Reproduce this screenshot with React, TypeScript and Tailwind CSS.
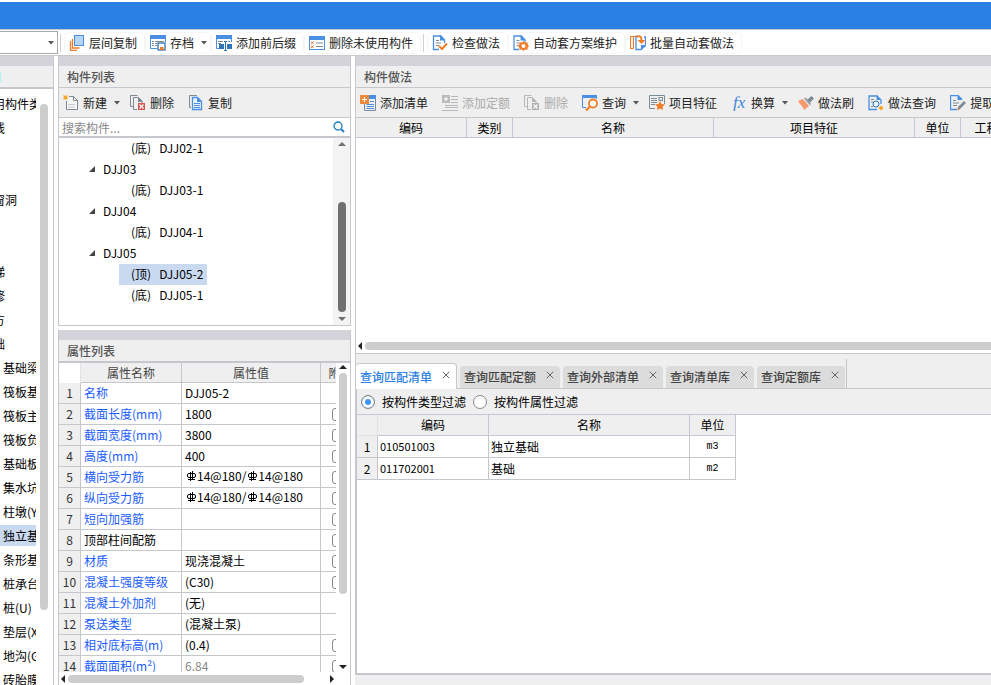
import React, { useState } from 'react';
import { X } from 'lucide-react';

interface IconButtonProps {
  icon: React.ReactNode;
  label: string;
  dropdown?: boolean;
  disabled?: boolean;
  framed?: boolean;
}

interface PropertyRow {
  name: string;
  value: string;
  linked?: boolean;
  readOnly?: boolean;
  attach?: boolean;
}

interface QueryItem {
  code: string;
  name: string;
  unit: string;
}

const BLUE = '#4a90e2';
const DARK_BLUE = '#2f74b5';
const ORANGE = '#f07c28';
const SLATE = '#7c8a94';

const Svg = ({ children }: { children: React.ReactNode }) => (
  <svg className="h-4 w-4 shrink-0" viewBox="0 0 16 16" fill="none" aria-hidden="true">
    {children}
  </svg>
);

const LayerCopyIcon = () => (
  <Svg>
    <path d="M1.5 6v9.500H8M3.500 4v9h7" stroke={ORANGE} strokeWidth="1.3" />
    <rect x="5.500" y=".5" width="9" height="10" fill="#b5d6f8" stroke={BLUE} />
  </Svg>
);

const ArchiveIcon = () => (
  <Svg>
    <path d="M.5 3v10.500H7M15.500 3v4" stroke={BLUE} />
    <path d="M0 0h16v4H0z" fill={BLUE} />
    <path d="M2 6.500h2M2 8.500h2M2 10.500h2M5 6.500h9M5 8.500h2M5 10.500h2" stroke={SLATE} />
    <rect x="8" y="8" width="7" height="7" fill="#fff" stroke={DARK_BLUE} strokeWidth="1.3" />
    <path d="M10 12h3.500v3H10z" fill={ORANGE} />
  </Svg>
);

const AffixIcon = () => (
  <Svg>
    <path d="M0 0h16v4H0z" fill={BLUE} />
    <path d="M.5 4v9.500H3M15.500 4v3" stroke={BLUE} />
    <path d="M2 6.500h5M2 8.500h3M12 6.500h2" stroke={SLATE} />
    <path d="M3 9h5v5H3zM11 9h5v5h-5z" fill={DARK_BLUE} />
    <path d="M9.500 7v8M8 6.500h3M8 15.500h3" stroke={DARK_BLUE} />
  </Svg>
);

const UnusedIcon = () => (
  <Svg>
    <rect x=".5" y="1.500" width="15" height="13" fill="#fff" stroke={BLUE} />
    <path d="M0 1h16v4H0z" fill={BLUE} />
    <path d="M2 6.500l2.500 2.500m0-2.500L2 9M2 10.500L4.500 13m0-2.500L2 13" stroke={ORANGE} />
    <path d="M7 8h7M7 11.500h7" stroke={SLATE} />
  </Svg>
);

const CheckDocIcon = () => (
  <Svg>
    <path d="M7 14.500H1.500V1H9l3.500 4v3" stroke={BLUE} strokeWidth="1.3" />
    <path d="M8 0l5.500 5.500H8z" fill={BLUE} />
    <path d="M4 5.500h3M4 8h5M4 10.500h3" stroke={SLATE} />
    <path d="M7 11l3 3 5-5.500" stroke={ORANGE} strokeWidth="2" />
  </Svg>
);

const MaintainIcon = () => (
  <Svg>
    <path d="M6 14.500H1V1h7.500L12 5v2" stroke={BLUE} strokeWidth="1.3" />
    <path d="M7.500 0L13 5.500H7.500z" fill={BLUE} />
    <path d="M3.500 5.500h3M3.500 8h3M3.500 10.500h2" stroke={SLATE} />
    <path d="M10.500 6l1.500 1.500 2.500-.3.200 2.300L16 11l-1.300 1.500-.2 2.300-2.500-.3-1.500 1.500L9 14.500l-2.500.3-.2-2.300L5 11l1.300-1.500.2-2.300 2.500.3z" fill={ORANGE} />
    <circle cx="10.500" cy="11" r="2" fill="#fff" />
  </Svg>
);

const BatchIcon = () => (
  <Svg>
    <path d="M3.500 1.500h-3v12h3M6 1.500H3.500v12" stroke={ORANGE} strokeWidth="1.2" />
    <path d="M7.500 1.500H6v13h5l4.500-4V2H14" stroke={BLUE} strokeWidth="1.3" />
    <path d="M16 10l-5 5v-5z" fill={BLUE} />
    <path d="M6.500 1.500c4-1 5 .5 5 4" stroke={ORANGE} strokeWidth="2" />
    <path d="M7.500 5h8l-4 4z" fill={ORANGE} />
  </Svg>
);

const NewIcon = () => (
  <Svg>
    <path d="M6 1.500h4.500l4 4v9h-11V6" fill="#f7f7f7" stroke={SLATE} />
    <path d="M10.500 1.500v4h4" stroke={SLATE} />
    <path d="M5 9.500h7M5 12h7" stroke="#c5cacd" />
    <path d="M2.500 0v5M0 2.500h5M.5.5l4 4M4.500.5l-4 4" stroke="#f5a623" />
  </Svg>
);

const DeleteIcon = ({ muted }: { muted?: boolean }) => (
  <Svg>
    <path d="M3 11.500H.5v-11h7" stroke={muted ? '#b8b8b8' : SLATE} />
    <path d="M7 14.500H3.500v-12h5L12 6v2" stroke={muted ? '#b8b8b8' : SLATE} />
    <path d="M8 2l5 5H8z" fill={muted ? '#b8b8b8' : SLATE} />
    <path d="M8 8h7v7H8z" fill={muted ? '#b0b0b0' : '#d9534f'} />
    <path d="M9.500 9.500l4 4m0-4l-4 4" stroke="#fff" strokeWidth="1.2" />
  </Svg>
);

const CopyIcon = () => (
  <Svg>
    <path d="M3 12.500H1.500v-12H9" stroke={SLATE} />
    <path d="M4.500 2.500h5l4 4v8h-9z" fill="#eaf3fd" stroke={BLUE} strokeWidth="1.3" />
    <path d="M9 2l5 5H9z" fill={BLUE} />
    <path d="M6 8.500h6M6 10.500h6M6 12.500h6" stroke={BLUE} />
  </Svg>
);

const AddListIcon = ({ muted }: { muted?: boolean }) => (
  <Svg>
    {muted ? (
      <>
        <path d="M9 1.500h7M9 4.500h7M9 7.500h7M3 10.500h13M3 12.500h13M0 15.500h16" stroke="#b8b8b8" />
        <path d="M0 0h8v8H0z" fill="#bcbcbc" />
        <path d="M4 2v4M2 4h4" stroke="#fff" />
      </>
    ) : (
      <>
        <path d="M15.500 3v12.500h-11V9" stroke={SLATE} />
        <path d="M9 0h7v4H9z" fill={BLUE} />
        <path d="M10 6.500h4M6.500 9.500H14M6.500 11.500H14M6.500 13.500H14" stroke={BLUE} />
        <path d="M0 0h9v9H0z" fill="#ee8a3c" />
        <path d="M4.500 2v5M2 4.500h5" stroke="#fff" />
      </>
    )}
  </Svg>
);

const QueryIcon = () => (
  <Svg>
    <path d="M4 12.500H.5V1M14.500 1v3" stroke={BLUE} />
    <path d="M0 0h15v3H0z" fill={BLUE} />
    <circle cx="11" cy="8.500" r="4" fill="#fff" stroke={ORANGE} strokeWidth="1.8" />
    <path d="M8 11.500L4 15.500" stroke={ORANGE} strokeWidth="2.2" />
  </Svg>
);

const FeatureIcon = () => (
  <Svg>
    <path d="M6 13.500H.5V.5h15V9" stroke={SLATE} />
    <path d="M2 3.500h6M2 5.500h6M2 7.500h6M2 9.500h4" stroke={SLATE} />
    <rect x="10" y="2.500" width="3.500" height="3" stroke={SLATE} />
    <path d="M11 6l1.500 3 3.500.4-2.500 2.300.6 3.300-3.100-1.600L7.900 15l.6-3.300L6 9.400 9.500 9z" fill={ORANGE} />
  </Svg>
);

const FxIcon = () => (
  <svg className="h-4 w-4 shrink-0" viewBox="0 0 16 16" aria-hidden="true">
    <text x="2" y="13" fontSize="17" fontStyle="italic" fontFamily="Liberation Serif, serif" fill="#3f86d6">
      fx
    </text>
  </svg>
);

const BrushIcon = () => (
  <Svg>
    <path d="M9 5l4.500-4L16 3.500 11.500 8z" fill={SLATE} />
    <path d="M6 3.500l2-1 5 6-1 2z" fill="#93a0a8" />
    <path d="M0 6l5-2 6 7-5 4c-1-4-4-5-6-9z" fill="#f79a6c" />
  </Svg>
);

const SearchDocIcon = () => (
  <Svg>
    <path d="M9 14.500H1V1h8l4 4v4" stroke={BLUE} strokeWidth="1.3" />
    <path d="M8.500 0l5 5h-5z" fill={BLUE} />
    <path d="M3 4.500h3M3 7h2M3 11.500h2" stroke={SLATE} />
    <circle cx="8" cy="9" r="3" fill="#e6f1fc" stroke={DARK_BLUE} />
    <path d="M13 10.500l2.500 2.500-2.500 2.500-2.500-2.500z" fill="#f5a623" />
  </Svg>
);

const ExtractIcon = () => (
  <Svg>
    <path d="M7 14.500H.5V.5H8l4 4" stroke={BLUE} strokeWidth="1.3" />
    <path d="M7.500 0l5 5h-5z" fill={BLUE} />
    <path d="M3 5.500h3M3 8h6M3 10.500h4" stroke={SLATE} />
    <path d="M14 6l2 2-6 6-2.500 1 .5-3z" fill={SLATE} />
    <path d="M8 13l2 1-2.500 1.500z" fill={ORANGE} />
  </Svg>
);

const SearchIcon = () => (
  <svg className="h-3 w-3 shrink-0" viewBox="0 0 12 12" fill="none" aria-hidden="true">
    <circle cx="5" cy="5" r="4" stroke="#1f7fc4" strokeWidth="1.3" />
    <path d="M8 8l3 3" stroke="#1f7fc4" strokeWidth="2" />
  </svg>
);

const Caret = () => (
  <svg className="h-1 w-1.5 shrink-0" viewBox="0 0 6 4" aria-hidden="true">
    <path d="M0 0h6L3 3.500z" fill="#555" />
  </svg>
);

const Arrow = ({ dir, color = '#222' }: { dir: 'up' | 'down' | 'left' | 'right'; color?: string }) => {
  const paths = {
    up: 'M0 6l4-4 4 4z',
    down: 'M0 2l4 4 4-4z',
    left: 'M6 0L2 4l4 4z',
    right: 'M2 0l4 4-4 4z'
  };
  return (
    <svg className="h-2 w-2 shrink-0" viewBox="0 0 8 8" aria-hidden="true">
      <path d={paths[dir]} fill={color} />
    </svg>
  );
};

// Steel grade mark in front of a bar diameter
const RebarMark = () => (
  <svg className="mb-1 inline h-3 w-3" viewBox="0 0 12 12" fill="none" aria-hidden="true">
    <rect x="2.500" y="3.500" width="8" height="4" rx="1.5" stroke="#000" />
    <path d="M5.500 2v9M7.500 1v9M3 9.500h7" stroke="#000" />
  </svg>
);

const IconButton = ({ icon, label, dropdown, disabled, framed }: IconButtonProps) => (
  <button
    type="button"
    disabled={disabled}
    className={`flex h-5 shrink-0 items-center gap-1 whitespace-nowrap rounded pl-1 text-[#222] disabled:text-[#aaa] ${
      dropdown ? 'pr-[3px]' : 'pr-[7px]'
    } ${framed ? 'shadow-[0_0_0_1px_#f6f6f6]' : ''}`}
  >
    {icon}
    <span className={dropdown ? 'mr-[3px]' : ''}>{label}</span>
    {dropdown && <Caret />}
  </button>
);

const PanelHeader = ({ title }: { title: string }) => (
  <>
    <div className="h-2.5 shrink-0 bg-[#d3d3d9]" />
    <h2 className="flex h-[22px] shrink-0 items-center border-b border-[#c5c7cc] bg-[#efefef] px-2 font-medium text-[#555]">
      {title}
    </h2>
  </>
);

const categories = [
  { label: '常用构件类型' },
  { label: '轴线' },
  { label: '' },
  { label: '' },
  { label: '门窗洞' },
  { label: '' },
  { label: '' },
  { label: '楼梯' },
  { label: '装修' },
  { label: '土方' },
  { label: '基础' },
  { label: '基础梁', child: true },
  { label: '筏板基础', child: true },
  { label: '筏板主筋', child: true },
  { label: '筏板负筋', child: true },
  { label: '基础板带', child: true },
  { label: '集水坑', child: true },
  { label: '柱墩(Y)', child: true },
  { label: '独立基础', child: true },
  { label: '条形基础', child: true },
  { label: '桩承台', child: true },
  { label: '桩(U)', child: true },
  { label: '垫层(X)', child: true },
  { label: '地沟(G)', child: true },
  { label: '砖胎膜', child: true }
];

const components = [
  { pos: '(底)', label: 'DJJ02-1' },
  { label: 'DJJ03' },
  { pos: '(底)', label: 'DJJ03-1' },
  { label: 'DJJ04' },
  { pos: '(底)', label: 'DJJ04-1' },
  { label: 'DJJ05' },
  { pos: '(顶)', label: 'DJJ05-2' },
  { pos: '(底)', label: 'DJJ05-1' }
];

const properties: PropertyRow[] = [
  { name: '名称', value: 'DJJ05-2', linked: true },
  { name: '截面长度(mm)', value: '1800', linked: true, attach: true },
  { name: '截面宽度(mm)', value: '3800', linked: true, attach: true },
  { name: '高度(mm)', value: '400', linked: true, attach: true },
  { name: '横向受力筋', value: '#14@180/#14@180', linked: true, attach: true },
  { name: '纵向受力筋', value: '#14@180/#14@180', linked: true, attach: true },
  { name: '短向加强筋', value: '', linked: true, attach: true },
  { name: '顶部柱间配筋', value: '', attach: true },
  { name: '材质', value: '现浇混凝土', linked: true, attach: true },
  { name: '混凝土强度等级', value: '(C30)', linked: true, attach: true },
  { name: '混凝土外加剂', value: '(无)', linked: true },
  { name: '泵送类型', value: '(混凝土泵)', linked: true },
  { name: '相对底标高(m)', value: '(0.4)', linked: true, attach: true },
  { name: '截面面积(m²)', value: '6.84', linked: true, readOnly: true, attach: true }
];

const tabs = ['查询匹配清单', '查询匹配定额', '查询外部清单', '查询清单库', '查询定额库'];

const queryItems: QueryItem[] = [
  { code: '010501003', name: '独立基础', unit: 'm3' },
  { code: '011702001', name: '基础', unit: 'm2' }
];

const TopToolbar = () => (
  <div className="flex h-[27px] shrink-0 items-center overflow-hidden border-y border-[#c8c8cd] bg-white">
    <div className="relative w-[58px] shrink-0">
      <select
        aria-label="楼层"
        className="block h-[23px] w-full appearance-none border border-l-0 border-[#a9a9ad] bg-white"
      />
      <span className="pointer-events-none absolute inset-y-0 right-1 flex items-center">
        <Caret />
      </span>
    </div>
    <div className="mr-1 ml-0.5 h-[18px] w-px shrink-0 bg-[#d0d0d0]" />
    <div className="flex gap-0.5">
      <IconButton framed icon={<LayerCopyIcon />} label="层间复制" />
      <IconButton framed icon={<ArchiveIcon />} label="存档" dropdown />
      <IconButton framed icon={<AffixIcon />} label="添加前后缀" />
      <IconButton framed icon={<UnusedIcon />} label="删除未使用构件" />
    </div>
    <div className="mr-1 ml-[3px] h-[18px] w-px shrink-0 bg-[#d0d0d0]" />
    <div className="flex gap-0.5">
      <IconButton framed icon={<CheckDocIcon />} label="检查做法" />
      <IconButton framed icon={<MaintainIcon />} label="自动套方案维护" />
      <IconButton framed icon={<BatchIcon />} label="批量自动套做法" />
    </div>
  </div>
);

const CategoryPanel = () => (
  <nav className="flex w-[54px] shrink-0 flex-col border-r border-[#c5c7cc] bg-white">
    <div className="h-2.5 shrink-0 bg-[#d3d3d9]" />
    <div className="flex h-[23px] shrink-0 items-center border-b-2 border-[#c5c7cc] bg-[#efefef]">
      <span className="h-2.5 w-px bg-[#b5f0f5]" />
    </div>
    <div className="flex min-h-0 flex-1">
      <ul className="w-9 overflow-hidden pt-1">
        {categories.map((item, i) => (
          <li
            key={i}
            className={`mb-[3px] flex h-[21px] items-center whitespace-nowrap ${
              item.label === '独立基础' ? 'bg-[#c8d9f0]' : ''
            }`}
          >
            <span className={item.child ? 'ml-[3px]' : '-ml-[19px]'}>{item.label}</span>
          </li>
        ))}
      </ul>
      <div className="mt-[15px] mb-[75px] ml-1 w-2 rounded-full bg-[#cdcdcd]" />
    </div>
  </nav>
);

const ComponentList = () => (
  <section className="flex h-[270px] shrink-0 flex-col border-x border-b border-[#c5c7cc]">
    <PanelHeader title="构件列表" />
    <div className="flex h-[30px] shrink-0 items-center gap-[3px] border-b border-[#c5c7cc] bg-[#efefef]">
      <IconButton icon={<NewIcon />} label="新建" dropdown />
      <IconButton icon={<DeleteIcon />} label="删除" />
      <IconButton icon={<CopyIcon />} label="复制" />
    </div>
    <div className="flex h-5 shrink-0 items-center border-b-2 border-[#c5c7cc] pr-[5px]">
      <input
        aria-label="搜索构件"
        placeholder="搜索构件..."
        className="h-full min-w-0 flex-1 px-[3px] outline-none placeholder:text-[#888]"
      />
      <SearchIcon />
    </div>
    <div className="flex min-h-0 flex-1">
      <ul className="flex-1 overflow-hidden">
        {components.map(item => (
          <li key={item.label} className="flex h-[21px] items-center leading-5">
            {item.pos ? (
              <span
                className={`ml-[60px] flex h-[21px] items-start gap-2 pr-1 pl-3 ${
                  item.label === 'DJJ05-2' ? 'bg-[#c8d9f0]' : ''
                }`}
              >
                <span>{item.pos}</span>
                <span>{item.label}</span>
              </span>
            ) : (
              <span className="ml-[29px] flex h-[21px] items-start gap-[7px]">
                <svg className="h-5 w-2" viewBox="0 0 8 20" aria-hidden="true">
                  <path d="M1 13h6V7z" fill="#444" />
                </svg>
                {item.label}
              </span>
            )}
          </li>
        ))}
      </ul>
      <div className="flex w-[17px] flex-col items-center bg-[#f3f3f3] py-0.5">
        <Arrow dir="up" color="#707070" />
        <div className="mt-[54px] mb-[3px] w-2 flex-1 rounded-full bg-[#707070]" />
        <Arrow dir="down" color="#707070" />
      </div>
    </div>
  </section>
);

const PropertyList = () => {
  const cell = 'h-[21px] border-r border-b border-[#c5c7cc] p-0';

  return (
    <section className="mt-1 flex min-h-0 flex-1 flex-col border-x border-[#c5c7cc]">
      <PanelHeader title="属性列表" />
      <div className="flex min-h-0 flex-1 border-t border-[#c5c7cc]">
        <div className="min-w-0 flex-1 overflow-hidden">
          <table className="w-[301px] table-fixed border-separate border-spacing-0">
            <thead>
              <tr className="text-[#444]">
                <th className="h-5 w-[22px] border-r border-[#e2e2e2] p-0" />
                <th className="w-[101px] border-r border-b border-[#c5c7cc] bg-[#efefef] p-0 font-normal">属性名称</th>
                <th className="w-[139px] border-r border-b border-[#c5c7cc] bg-[#efefef] p-0 font-normal">属性值</th>
                <th className="border-b border-[#c5c7cc] bg-[#efefef] p-0 font-normal">附加</th>
              </tr>
            </thead>
            <tbody>
              {properties.map((row, i) => (
                <tr key={row.name}>
                  <td className={`${cell} bg-[#efefef] text-center text-[#333]`}>{i + 1}</td>
                  <td className={`${cell} whitespace-nowrap ${row.linked ? 'text-[#1a5cff]' : ''}`}>
                    <span className="ml-[3px]">{row.name}</span>
                  </td>
                  <td className={`${cell} whitespace-nowrap ${row.readOnly ? 'text-[#888]' : ''}`}>
                    <span className="ml-[3px]">
                      {row.value.split('#').map((part, n) => (
                        <React.Fragment key={n}>
                          {n > 0 && <RebarMark />}
                          {part}
                        </React.Fragment>
                      ))}
                    </span>
                  </td>
                  <td className={cell}>
                    {row.attach && (
                      <input
                        type="checkbox"
                        aria-label={`附加 ${row.name}`}
                        className="ml-[11px] block h-[13px] w-[13px] appearance-none rounded-[3px] border border-[#888] bg-white"
                      />
                    )}
                  </td>
                </tr>
              ))}
            </tbody>
          </table>
        </div>
        <div className="flex w-3.5 shrink-0 flex-col items-center pb-px">
          <Arrow dir="up" />
          <div className="mt-0.5 mb-[69px] w-2 flex-1 rounded-full bg-[#cdcdcd]" />
          <Arrow dir="down" />
        </div>
      </div>
      <div className="flex h-[13px] shrink-0 items-center pr-3.5">
        <Arrow dir="left" />
        <div className="mr-6 ml-px h-2 flex-1 rounded-full bg-[#cdcdcd]" />
        <Arrow dir="right" />
      </div>
    </section>
  );
};

const MethodPanel = () => {
  const head = 'border-r border-b border-[#c3c8d4] p-0 font-normal';

  return (
    <section className="flex h-[298px] shrink-0 flex-col border-b border-l border-[#c5c7cc]">
      <PanelHeader title="构件做法" />
      <div className="flex h-[30px] shrink-0 items-center gap-[3px] overflow-hidden border-b border-[#c5c7cc] bg-[#efefef]">
        <IconButton icon={<AddListIcon />} label="添加清单" />
        <IconButton icon={<AddListIcon muted />} label="添加定额" disabled />
        <IconButton icon={<DeleteIcon muted />} label="删除" disabled />
        <IconButton icon={<QueryIcon />} label="查询" dropdown />
        <IconButton icon={<FeatureIcon />} label="项目特征" />
        <IconButton icon={<FxIcon />} label="换算" dropdown />
        <IconButton icon={<BrushIcon />} label="做法刷" />
        <IconButton icon={<SearchDocIcon />} label="做法查询" />
        <IconButton icon={<ExtractIcon />} label="提取做法" />
      </div>
      <div className="min-h-0 flex-1 overflow-hidden">
        <table className="w-[705px] table-fixed border-separate border-spacing-0">
          <thead>
            <tr className="h-5 bg-[#efefef]">
              <th className={`${head} w-[111px]`}>编码</th>
              <th className={`${head} w-[46px]`}>类别</th>
              <th className={`${head} w-[201px]`}>名称</th>
              <th className={`${head} w-[201px]`}>项目特征</th>
              <th className={`${head} w-[46px]`}>单位</th>
              <th className={head}>工程量表达式</th>
            </tr>
          </thead>
        </table>
      </div>
      <div className="flex h-[15px] shrink-0 items-center">
        <Arrow dir="left" />
        <div className="ml-px h-2 flex-1 rounded-l-full bg-[#cdcdcd]" />
      </div>
    </section>
  );
};

const QueryPanel = () => {
  const [activeTab, setActiveTab] = useState(0);
  const cell = 'h-[22px] border-r border-b border-[#c5c7cc] p-0';

  return (
    <section className="flex min-h-0 flex-1 flex-col bg-[#efefef]">
      <div className="flex h-[35px] shrink-0 items-end border-b border-l border-[#c5c7cc]">
        <div className="flex h-[29px] items-end gap-[3px] border-r border-[#c5c7cc] pr-px">
          {tabs.map((tab, i) => (
            <div
              key={tab}
              className={`flex items-center rounded-t pr-1 ${
                i === activeTab
                  ? '-mb-px h-[26px] border-t border-r border-[#c5c7cc] bg-white text-[#2b80e3]'
                  : 'h-[22px] bg-[#dcdcdc] text-[#444]'
              }`}
            >
              <button type="button" className="pr-2 pl-1 font-medium" onClick={() => setActiveTab(i)}>
                {tab}
              </button>
              <button type="button" aria-label={`关闭 ${tab}`} className="mb-1 text-[#666]">
                <X className="h-3 w-3" />
              </button>
            </div>
          ))}
        </div>
      </div>
      <div className="flex min-h-0 flex-1 flex-col border-b-2 border-l-2 border-[#c5c7cc] bg-white">
        <div className="flex h-[26px] shrink-0 items-center gap-[7px] border-b border-[#c3c8d4] bg-[#efefef] pl-1">
          {['按构件类型过滤', '按构件属性过滤'].map((label, i) => (
            <label key={label} className="flex items-center gap-[7px]">
              <input
                type="radio"
                name="filter"
                defaultChecked={i === 0}
                className="h-3.5 w-3.5 appearance-none rounded-full border border-[#888] bg-white checked:bg-[#3f95f5] checked:shadow-[inset_0_0_0_3px_white]"
              />
              {label}
            </label>
          ))}
        </div>
        <table className="w-[379px] table-fixed border-separate border-spacing-0">
          <thead>
            <tr className="h-[21px] bg-[#efefef]">
              <th className="w-[21px] border-r border-b border-[#e2e2e2] p-0" />
              <th className="w-[111px] border-r border-b border-[#c3c8d4] p-0 font-normal">编码</th>
              <th className="w-[201px] border-r border-b border-[#c3c8d4] p-0 font-normal">名称</th>
              <th className="border-r border-b border-[#c3c8d4] p-0 font-normal">单位</th>
            </tr>
          </thead>
          <tbody>
            {queryItems.map((item, i) => (
              <tr key={item.code}>
                <td className={`${cell} bg-[#efefef] text-center`}>{i + 1}</td>
                <td className={`${cell} pl-0.5 text-[11px]`}>{item.code}</td>
                <td className={`${cell} pl-0.5`}>{item.name}</td>
                <td className={`${cell} text-center font-['Liberation_Mono',monospace] text-[10px]`}>{item.unit}</td>
              </tr>
            ))}
          </tbody>
        </table>
      </div>
      <div className="h-2.5 shrink-0" />
    </section>
  );
};

const App: React.FC = () => {
  return (
    <div className="flex h-screen flex-col overflow-hidden bg-white font-['Noto_Sans_CJK_SC',sans-serif] text-xs text-black">
      {/* Title bar */}
      <header className="mt-0.5 h-[27px] shrink-0 bg-[#2b80e3]" />
      <TopToolbar />
      <main className="flex min-h-0 flex-1">
        <CategoryPanel />
        <div className="ml-1 flex w-[293px] shrink-0 flex-col">
          <ComponentList />
          <PropertyList />
        </div>
        <div className="ml-1 flex min-w-0 flex-1 flex-col">
          <MethodPanel />
          <QueryPanel />
        </div>
      </main>
    </div>
  );
};

export default App;
